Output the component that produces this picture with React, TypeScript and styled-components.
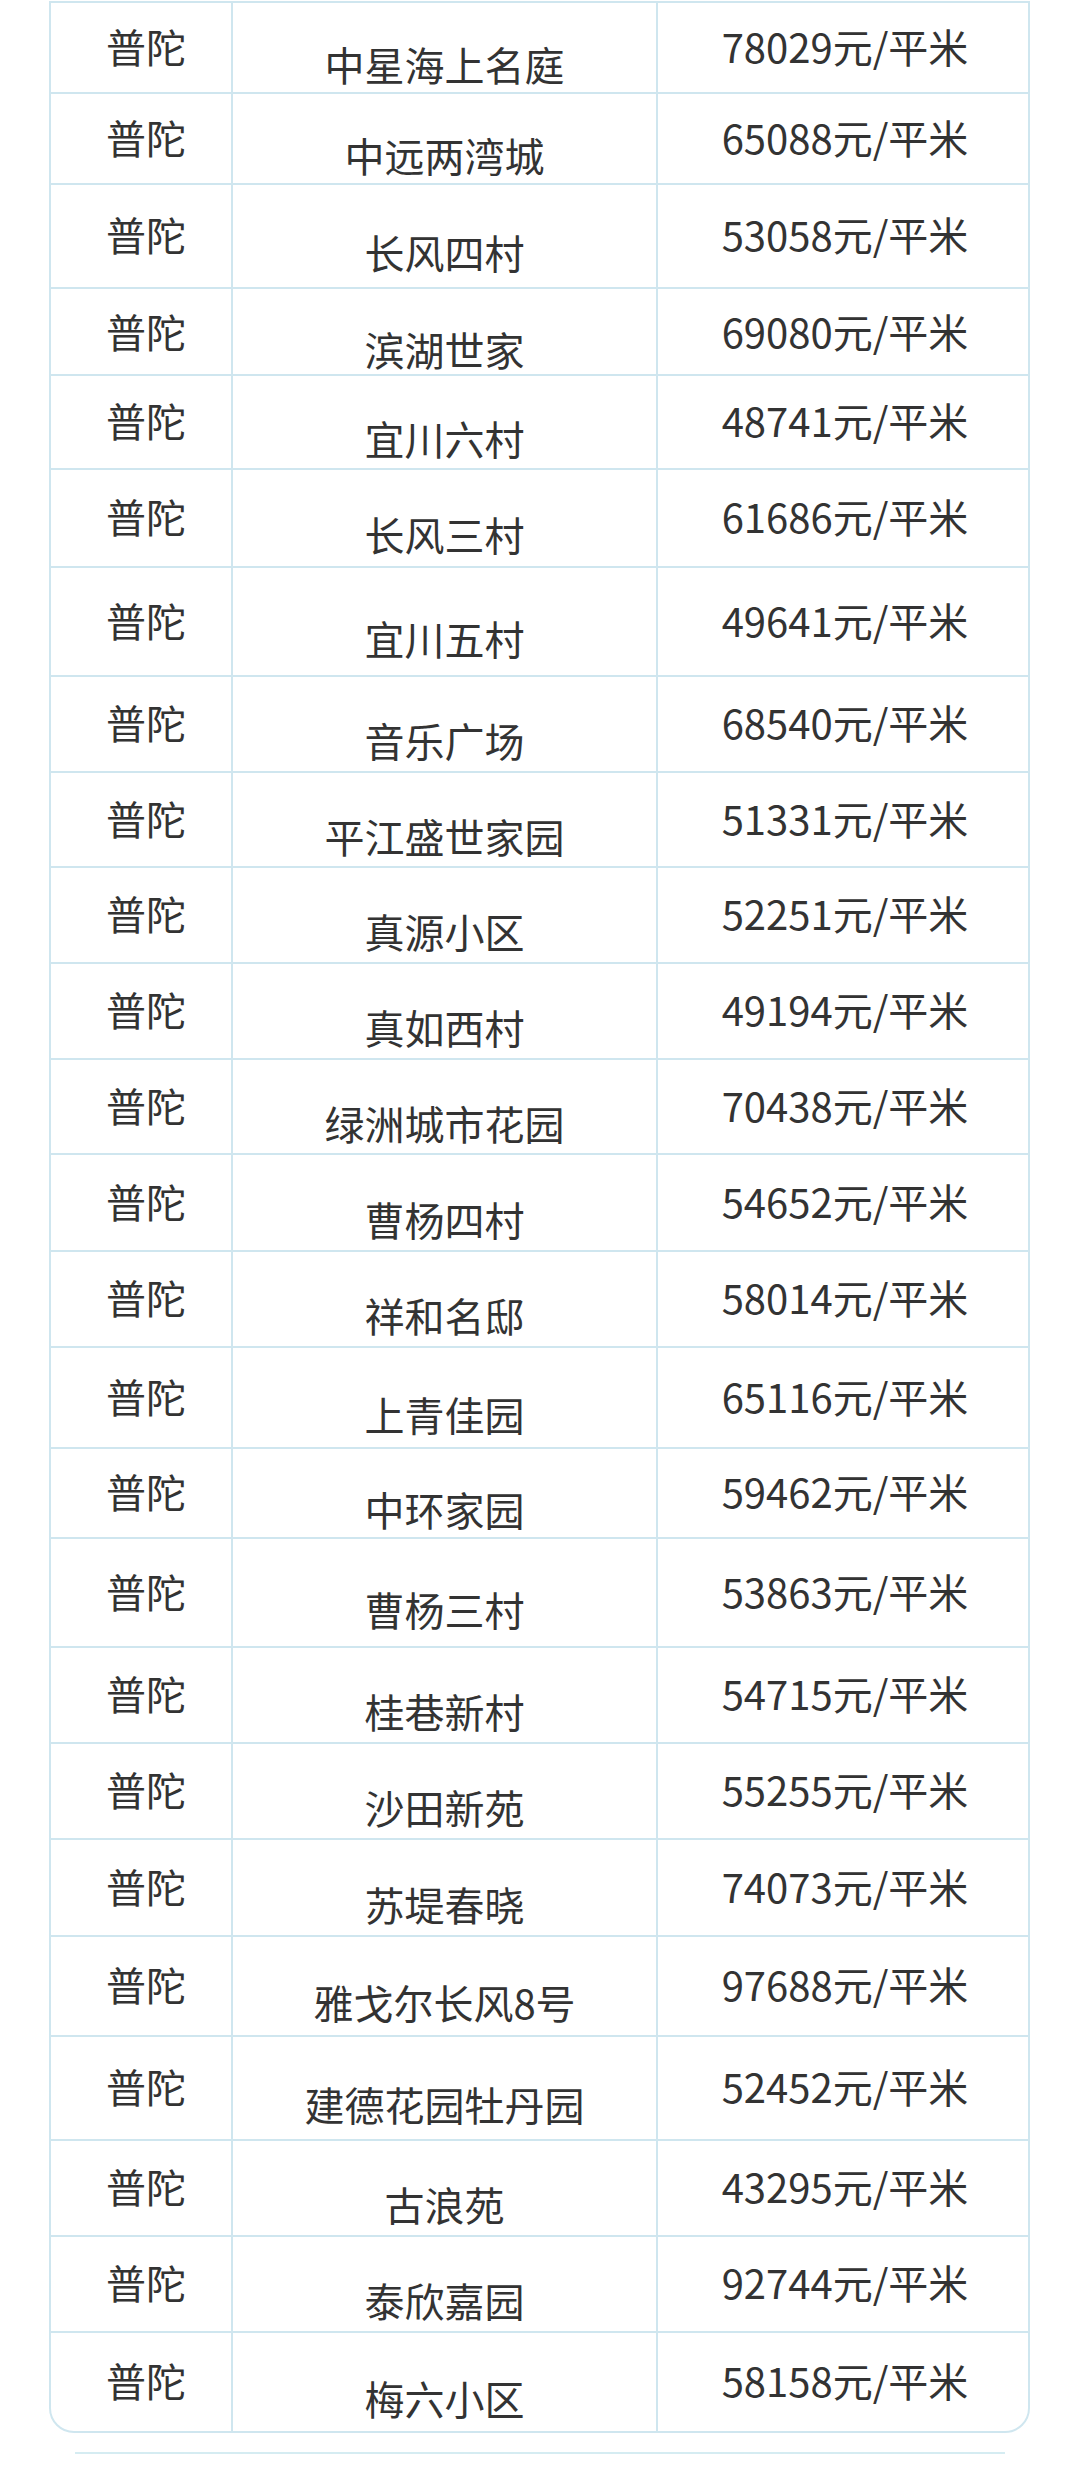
import React from 'react';
import styled, { createGlobalStyle } from 'styled-components';

const GlobalStyle = createGlobalStyle`
  html, body {
    margin: 0;
    padding: 0;
    background: #ffffff;
  }
  body {
    font-family: "Noto Sans CJK SC", "Noto Sans", sans-serif;
    color: #333333;
  }
  * {
    box-sizing: border-box;
  }
`;

const Page = styled.div`
  width: 1080px;
  height: 2473px;
  padding: 1px 0 0 49px;
  background: #ffffff;
`;

const Table = styled.div`
  width: 981px;
  border: 2px solid #cfe6ef;
  border-radius: 0 0 25px 25px;
  background: #ffffff;
`;

const Row = styled.div<{ $height: number; $last?: boolean }>`
  display: grid;
  grid-template-columns: 182px 425px 1fr;
  height: ${p => p.$height}px;
  border-bottom: ${p => (p.$last ? 'none' : '2px solid #cfe6ef')};
`;

const Cell = styled.div<{ $last?: boolean }>`
  display: flex;
  align-items: center;
  justify-content: center;
  font-size: 40px;
  line-height: 1.4;
  color: #333333;
  white-space: nowrap;
  border-right: ${p => (p.$last ? 'none' : '2px solid #cfe6ef')};
`;

const DistrictCell = styled(Cell)`
  padding: 0 0 4px 10px;
`;

const NameCell = styled(Cell)`
  padding-top: 32px;
`;

const PriceCell = styled(Cell)`
  padding: 0 0 4px 4px;
`;

const Divider = styled.div`
  width: 930px;
  height: 2px;
  margin: 19px 0 0 26px;
  background: #d5ecf2;
`;

const rows: [string, number, number][] = [
  ['中星海上名庭', 78029, 91],
  ['中远两湾城', 65088, 91],
  ['长风四村', 53058, 104],
  ['滨湖世家', 69080, 87],
  ['宜川六村', 48741, 94],
  ['长风三村', 61686, 98],
  ['宜川五村', 49641, 109],
  ['音乐广场', 68540, 96],
  ['平江盛世家园', 51331, 95],
  ['真源小区', 52251, 96],
  ['真如西村', 49194, 96],
  ['绿洲城市花园', 70438, 95],
  ['曹杨四村', 54652, 97],
  ['祥和名邸', 58014, 96],
  ['上青佳园', 65116, 101],
  ['中环家园', 59462, 90],
  ['曹杨三村', 53863, 109],
  ['桂巷新村', 54715, 96],
  ['沙田新苑', 55255, 96],
  ['苏堤春晓', 74073, 97],
  ['雅戈尔长风8号', 97688, 100],
  ['建德花园牡丹园', 52452, 104],
  ['古浪苑', 43295, 96],
  ['泰欣嘉园', 92744, 96],
  ['梅六小区', 58158, 98],
];

const App: React.FC = () => (
  <>
    <GlobalStyle />
    <Page>
      <Table>
        {rows.map(([name, price, height], i) => (
          <Row key={name} $height={height} $last={i === rows.length - 1}>
            <DistrictCell>普陀</DistrictCell>
            <NameCell>{name}</NameCell>
            <PriceCell $last>{price}元/平米</PriceCell>
          </Row>
        ))}
      </Table>
      <Divider />
    </Page>
  </>
);

export default App;
